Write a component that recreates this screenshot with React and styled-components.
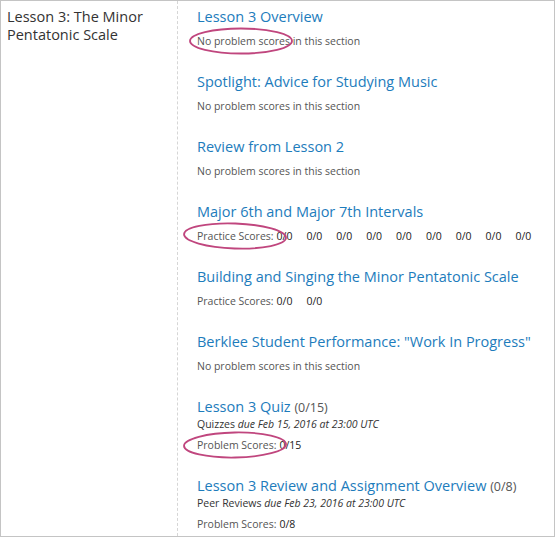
import React from 'react';
import styled, { createGlobalStyle } from 'styled-components';

const GlobalStyle = createGlobalStyle`
  html, body {
    margin: 0;
    padding: 0;
    background: #fff;
  }
  body {
    font-family: "Open Sans", "Liberation Sans", sans-serif;
  }
`;

const Frame = styled.div`
  box-sizing: border-box;
  width: 555px;
  height: 537px;
  border: 1px solid #c4c4c4;
  display: flex;
  overflow: hidden;
`;

const LessonName = styled.h2`
  box-sizing: border-box;
  width: 177px;
  flex: none;
  margin: 0;
  padding: 7px 0 0 6px;
  font-size: 14.5px;
  line-height: 18px;
  font-weight: 400;
  color: #333;
  border-right: 1px dashed #d6d6d6;
`;

const Sections = styled.div`
  flex: 1;
  padding: 7px 0 0 19px;
`;

const Section = styled.div`
  margin-bottom: 24px;
`;

const Title = styled.a`
  display: block;
  font-size: 14.5px;
  line-height: 18px;
  color: #1d7cbc;
  text-decoration: none;
  white-space: nowrap;
`;

const Count = styled.span`
  font-size: 12.5px;
  color: #555;
`;

const Due = styled.div`
  font-size: 10.5px;
  line-height: 14px;
  color: #333;
  white-space: nowrap;

  em {
    font-style: italic;
  }
`;

const Line = styled.div`
  position: relative;
  margin-top: ${(p) => (p.$afterDue ? '6px' : '7px')};
  font-size: 10.5px;
  line-height: 16px;
  color: #555;
  white-space: nowrap;
`;

const Score = styled.span`
  display: inline-block;
  margin-left: ${(p) => (p.$first ? '3px' : '14px')};
  color: #222;
`;

const Mark = styled.svg`
  position: absolute;
  left: ${(p) => p.$left}px;
  top: 50%;
  width: 104px;
  height: 28px;
  transform: translateY(-50%) rotate(${(p) => p.$tilt || 0}deg);
  pointer-events: none;
  overflow: visible;
`;

function Highlight({ tilt, left = -8 }) {
  return (
    <Mark $tilt={tilt} $left={left} viewBox="0 0 104 28">
      <ellipse cx="52" cy="14" rx="51" ry="12.5" fill="none" stroke="#c0467e" strokeWidth="1.8" />
    </Mark>
  );
}

function Scores({ label, values, marked, tilt, afterDue }) {
  return (
    <Line $afterDue={afterDue}>
      {marked && <Highlight tilt={tilt} left={-14} />}
      {label}
      {values.map((v, i) => (
        <Score key={i} $first={i === 0}>{v}</Score>
      ))}
    </Line>
  );
}

function NoScores({ marked }) {
  return (
    <Line>
      {marked && <Highlight />}
      No problem scores in this section
    </Line>
  );
}

export default function App() {
  return (
    <>
      <GlobalStyle />
      <Frame>
        <LessonName>
          Lesson 3: The Minor
          <br />
          Pentatonic Scale
        </LessonName>
        <Sections>
          <Section>
            <Title>Lesson 3 Overview</Title>
            <NoScores marked />
          </Section>
          <Section>
            <Title>Spotlight: Advice for Studying Music</Title>
            <NoScores />
          </Section>
          <Section>
            <Title>Review from Lesson 2</Title>
            <NoScores />
          </Section>
          <Section>
            <Title>Major 6th and Major 7th Intervals</Title>
            <Scores
              label="Practice Scores:"
              values={Array(9).fill('0/0')}
              marked
              tilt={2}
            />
          </Section>
          <Section>
            <Title>Building and Singing the Minor Pentatonic Scale</Title>
            <Scores label="Practice Scores:" values={['0/0', '0/0']} />
          </Section>
          <Section>
            <Title>Berklee Student Performance: "Work In Progress"</Title>
            <NoScores />
          </Section>
          <Section>
            <Title>
              Lesson 3 Quiz <Count>(0/15)</Count>
            </Title>
            <Due>
              Quizzes <em>due Feb 15, 2016 at 23:00 UTC</em>
            </Due>
            <Scores label="Problem Scores:" values={['0/15']} marked tilt={-1} afterDue />
          </Section>
          <Section>
            <Title>
              Lesson 3 Review and Assignment Overview <Count>(0/8)</Count>
            </Title>
            <Due>
              Peer Reviews <em>due Feb 23, 2016 at 23:00 UTC</em>
            </Due>
            <Scores label="Problem Scores:" values={['0/8']} afterDue />
          </Section>
        </Sections>
      </Frame>
    </>
  );
}
